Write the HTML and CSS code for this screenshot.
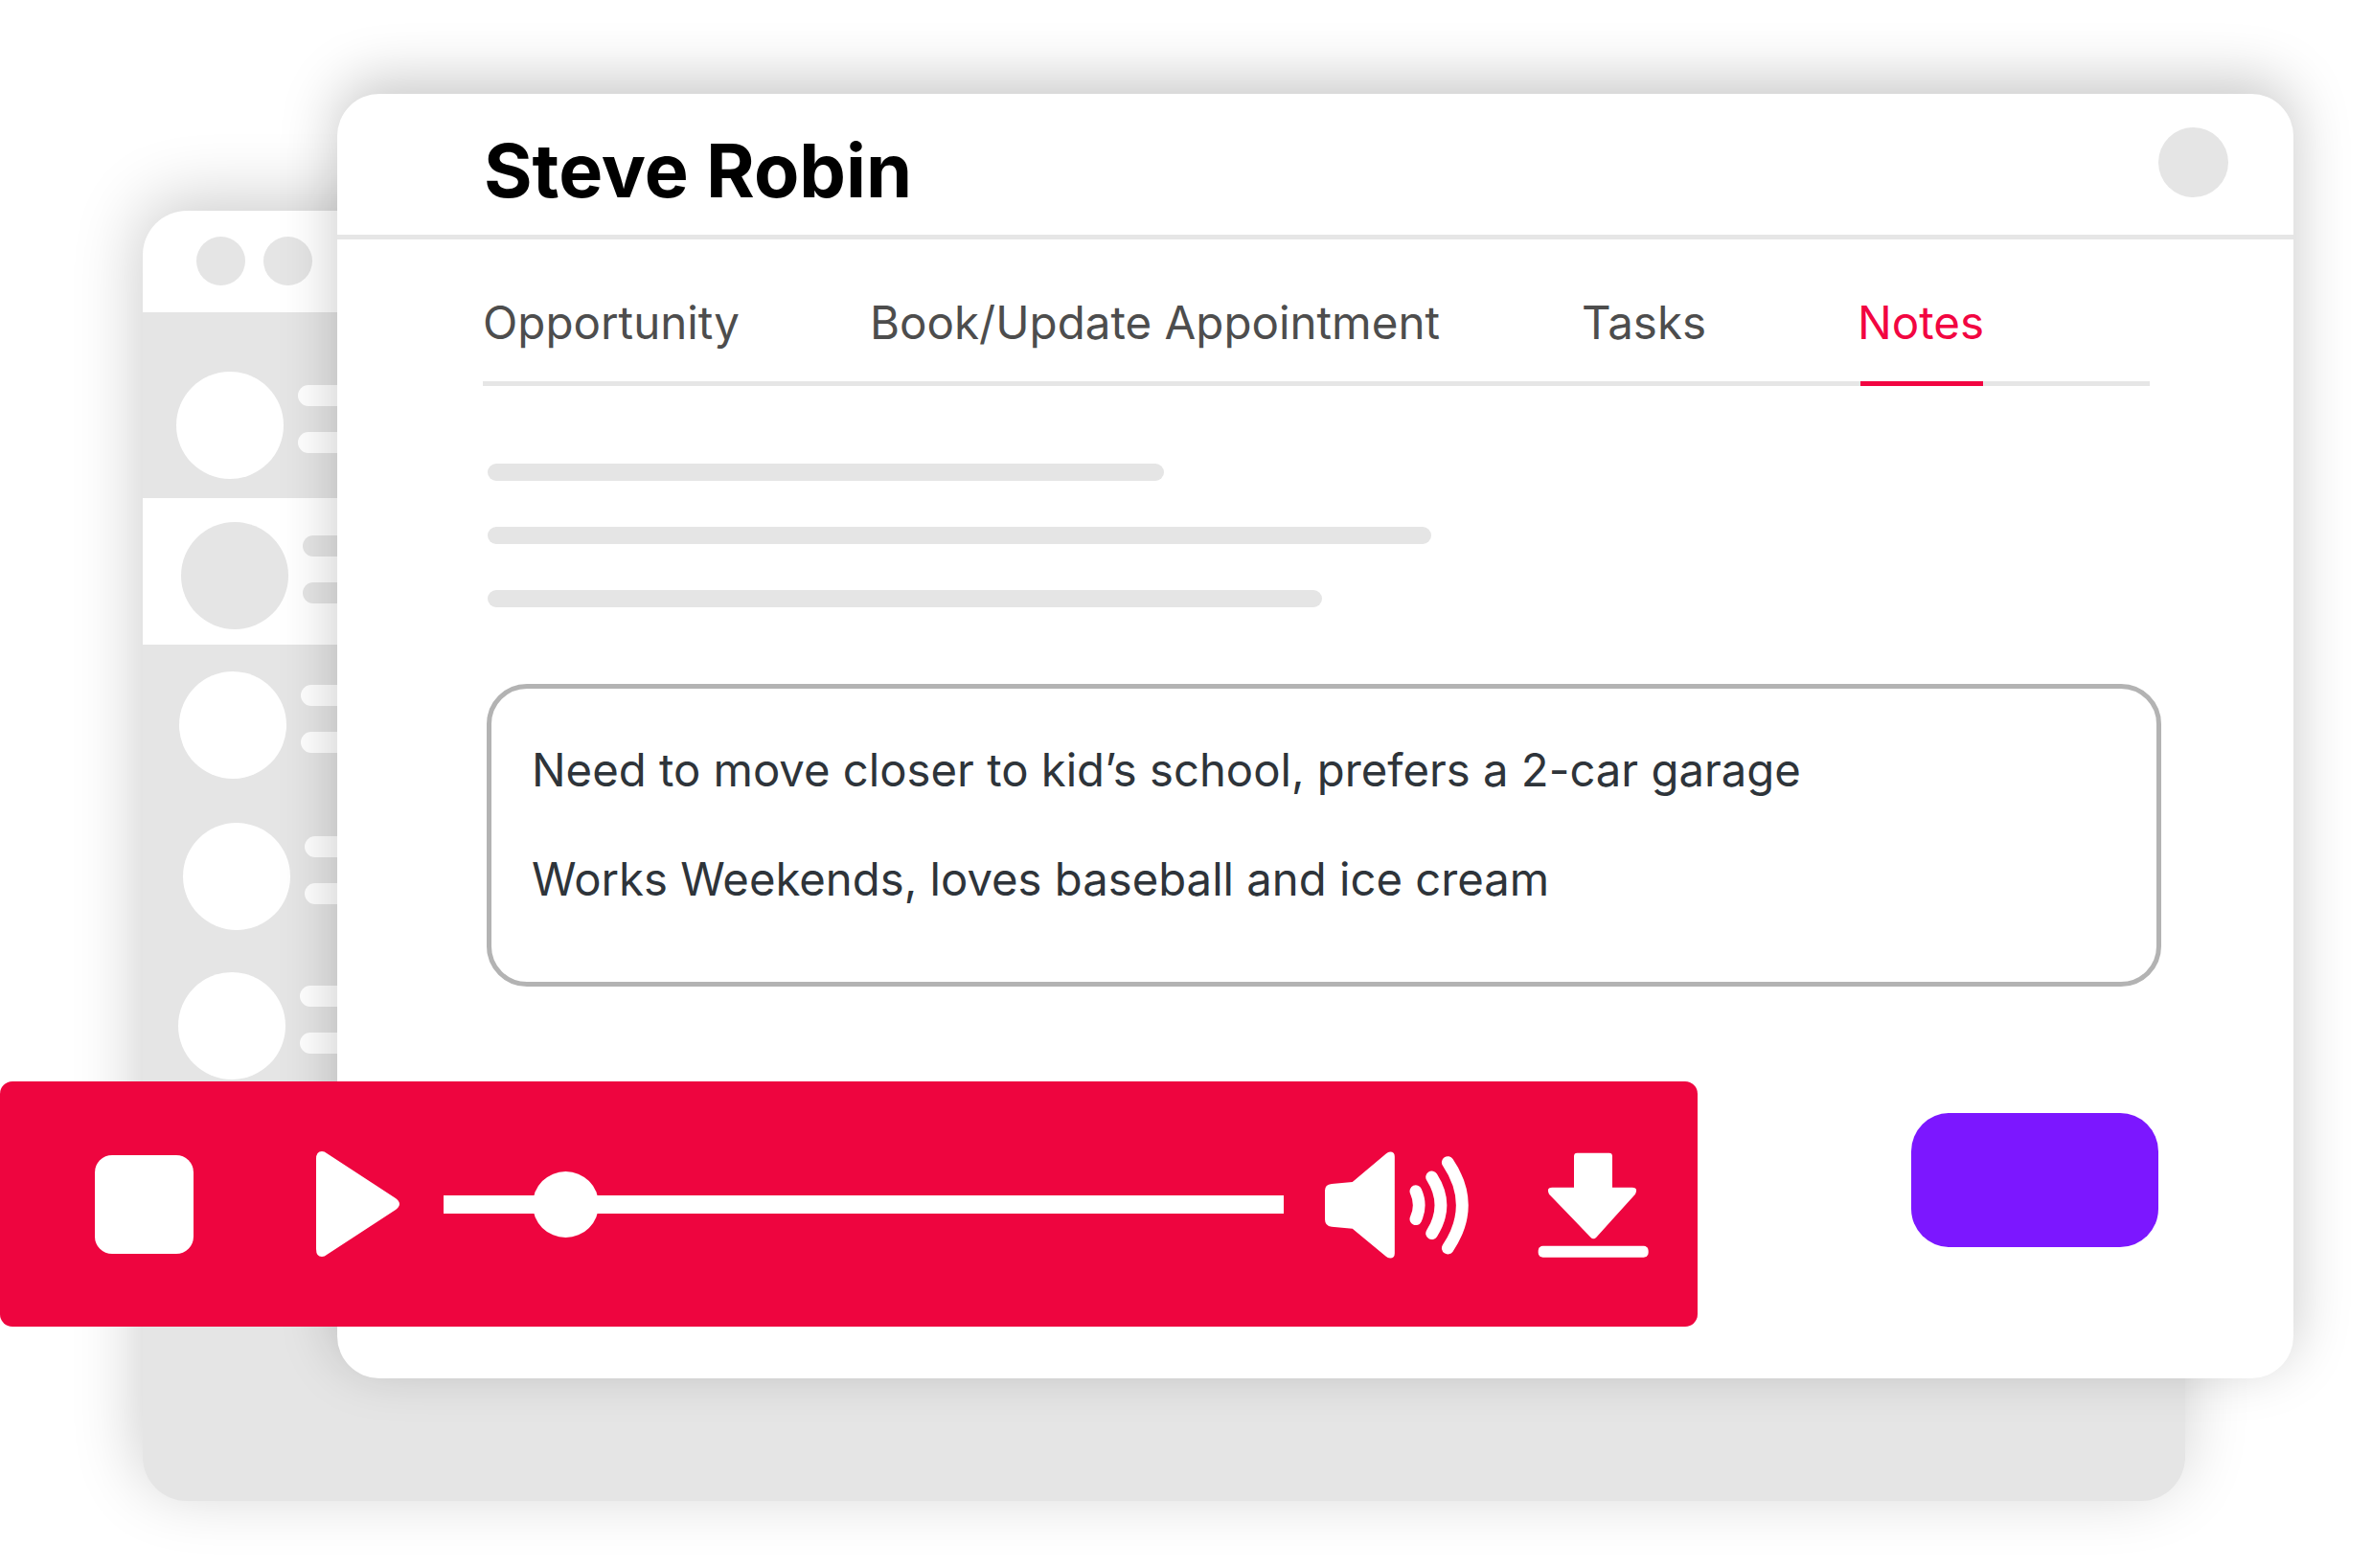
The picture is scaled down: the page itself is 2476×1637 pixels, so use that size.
FILE: index.html
```html
<!DOCTYPE html>
<html>
	<head>
		<meta charset="utf-8">
		<title>Steve Robin</title>
		<link rel="stylesheet" href="styles.css">
	</head>
	<body>
		<div class="stage">
			<!-- window behind -->
			<div class="back">
				<div class="back-head">
					<i class="dot"></i>
					<i class="dot"></i>
				</div>
				<div class="row row1">
					<i class="pic"></i>
					<div class="lines"><i></i><i></i></div>
				</div>
				<div class="row row2">
					<i class="pic"></i>
					<div class="lines"><i></i><i></i></div>
				</div>
				<div class="row row3">
					<i class="pic"></i>
					<div class="lines"><i></i><i></i></div>
				</div>
				<div class="row row4">
					<i class="pic"></i>
					<div class="lines"><i></i><i></i></div>
				</div>
				<div class="row row5">
					<i class="pic"></i>
					<div class="lines"><i></i><i></i></div>
				</div>
			</div>

			<!-- main window -->
			<div class="front">
				<div class="head">
					<h1>Steve Robin</h1>
					<i class="avatar"></i>
				</div>
				<div class="tabs">
					<a>Opportunity</a>
					<a>Book/Update Appointment</a>
					<a>Tasks</a>
					<a class="active">Notes</a>
				</div>
				<div class="skeleton">
					<i class="w1"></i>
					<i class="w2"></i>
					<i class="w3"></i>
				</div>
				<div class="note">
					<p>Need to move closer to kid’s school, prefers a 2-car garage</p>
					<p>Works Weekends, loves baseball and ice cream</p>
				</div>
				<div class="save"></div>
			</div>

			<!-- audio player -->
			<div class="player">
				<i class="stop"></i>
				<svg class="play" width="87" height="110" viewBox="0 0 87 110">
					<path d="M0 8 Q0 0 6 0 Q9 0 11 2 L83 49 Q87 52 87 55 Q87 58 83 61 L11 108 Q9 110 6 110 Q0 110 0 102 Z"/>
				</svg>
				<div class="track"><i class="knob"></i></div>
				<svg class="volume" width="157" height="117" viewBox="240 294.5 470 350">
					<path d="M467 320 V622 Q467 637 453 637 Q445 637 440 632 L335 545 L270 539 Q249 537 249 516 V426 Q249 407 270 405 L335 399 L440 311 Q447 305 453 305 Q467 305 467 320 Z"/>
					<path class="wave" d="M533 428 Q553 472 533 515"/>
					<path class="wave" d="M583 384 Q639 472 583 560"/>
					<path class="wave" d="M633 338 Q723 472 633 606"/>
				</svg>
				<svg class="download" width="120" height="115" viewBox="910 298 360 345">
					<path d="M1040 309 H1140 Q1150 309 1150 319 V417 H1212 Q1232 417 1222 438 L1100 573 Q1091 582 1082 573 L952 438 Q942 417 962 417 H1030 V319 Q1030 309 1040 309 Z"/>
					<rect x="918" y="600" width="345" height="36" rx="15"/>
				</svg>
			</div>
		</div>
	</body>
</html>
```

FILE: styles.css
```css
body, h1, p{
	margin: 0;
	padding: 0;
}
body{
	background: #fff;
	font-family: Inter, "Liberation Sans", sans-serif;
}
i{
	display: block;
}
.stage{
	width: 2476px;
	height: 1637px;
	position: relative;
	overflow: hidden;
}

/* window behind */
.back{
	position: absolute;
	left: 149px;
	top: 220px;
	width: 2132px;
	height: 1347px;
	border-radius: 46px;
	background: #e5e5e5;
	box-shadow: -4px -12px 70px rgba(0, 0, 0, .2);
	overflow: hidden;
}
.back-head{
	display: flex;
	gap: 19px;
	height: 106px;
	padding: 27px 0 0 56px;
	box-sizing: border-box;
	background: #fff;
}
.dot{
	width: 51px;
	height: 51px;
	border-radius: 50%;
	background: #e5e5e5;
}
.row{
	display: flex;
	gap: 15px;
	box-sizing: border-box;
}
.row1{
	height: 194px;
	padding: 62px 0 0 35px;
}
.row2{
	height: 153px;
	padding: 25px 0 0 40px;
	background: #fff;
}
.row3{
	height: 158px;
	padding: 28px 0 0 38px;
}
.row4{
	height: 156px;
	padding: 28px 0 0 42px;
}
.row5{
	padding: 28px 0 0 37px;
}
.pic{
	width: 112px;
	height: 112px;
	border-radius: 50%;
	background: #fff;
}
.row2 .pic{
	background: #e5e5e5;
}
.lines{
	padding-top: 14px;
}
.lines i{
	width: 120px;
	height: 22px;
	margin-bottom: 27px;
	border-radius: 11px;
	background: #fff;
}
.row2 .lines i{
	background: #e5e5e5;
}

/* main window */
.front{
	position: absolute;
	left: 352px;
	top: 98px;
	width: 2042px;
	height: 1341px;
	border-radius: 44px;
	background: #fff;
	box-shadow: 0 -14px 60px rgba(0, 0, 0, .22);
}
.head{
	display: flex;
	justify-content: space-between;
	height: 152px;
	padding: 36px 68px 0 153px;
	box-sizing: border-box;
	border-bottom: 5px solid #e6e6e6;
}
h1{
	font-size: 77.3px;
	line-height: 88px;
	font-weight: 700;
	color: #000;
}
.avatar{
	width: 73px;
	height: 73px;
	margin-top: -1px;
	border-radius: 50%;
	background: #e5e5e5;
}
.tabs{
	display: grid;
	grid-template-columns: 404px 743px 290px auto;
	justify-content: start;
	width: 1740px;
	height: 153px;
	margin-left: 152px;
	box-sizing: border-box;
	border-bottom: 5px solid #e6e6e6;
	font-size: 47.5px;
	line-height: 174px;
	color: #4d4d4d;
}
.tabs a{
	height: 153px;
}
.tabs .active{
	width: 128px;
	margin-left: 1px;
	box-sizing: border-box;
	border-bottom: 5px solid #f20541;
	text-indent: -3px;
	color: #f20541;
}
.skeleton{
	margin: 81px 0 0 157px;
}
.skeleton i{
	height: 18px;
	margin-bottom: 48px;
	border-radius: 9px;
	background: #e5e5e5;
}
.skeleton .w1{
	width: 706px;
}
.skeleton .w2{
	width: 985px;
}
.skeleton .w3{
	width: 871px;
}
.note{
	width: 1748px;
	height: 316px;
	margin: 80px 0 0 156px;
	padding: 57px 0 0 42px;
	box-sizing: border-box;
	border: 5px solid #b3b3b3;
	border-radius: 42px;
	font-size: 47.25px;
	line-height: 56px;
	color: #2e343a;
}
.note p{
	margin-bottom: 58px;
}
.save{
	width: 258px;
	height: 140px;
	margin: 132px 0 0 1643px;
	border-radius: 40px;
	background: #7c17ff;
}

/* audio player, lies over both windows */
.player{
	position: absolute;
	left: 0;
	top: 1129px;
	display: flex;
	align-items: center;
	width: 1772px;
	height: 256px;
	padding-left: 99px;
	box-sizing: border-box;
	border-radius: 13px;
	background: #ee053f;
}
.player svg{
	display: block;
	flex: none;
	fill: #fff;
}
.stop{
	width: 103px;
	height: 103px;
	border-radius: 18px;
	background: #fff;
}
.play{
	margin-left: 128px;
}
.track{
	position: relative;
	width: 877px;
	height: 19px;
	margin-left: 46px;
	background: #fff;
}
.knob{
	position: absolute;
	left: 93px;
	top: -25px;
	width: 69px;
	height: 69px;
	border-radius: 50%;
	background: #fff;
}
.volume{
	margin-left: 40px;
}
.wave{
	fill: none;
	stroke: #fff;
	stroke-width: 38;
	stroke-linecap: round;
}
.download{
	margin-left: 66px;
}
```
